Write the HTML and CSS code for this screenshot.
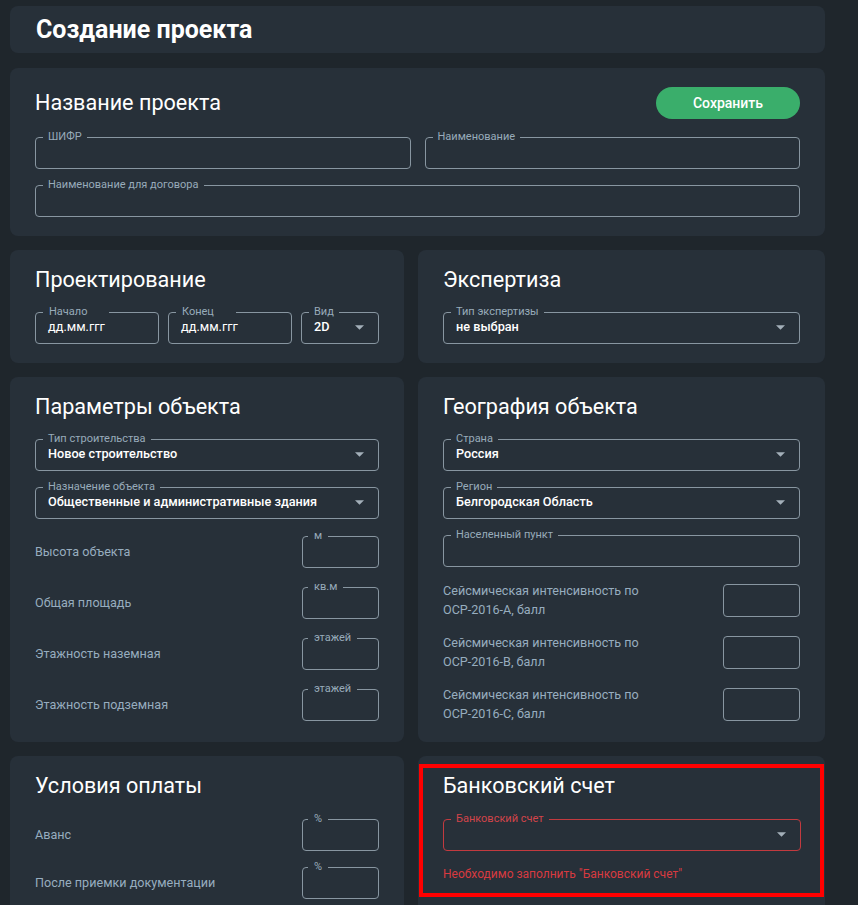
FILE: index.html
```html
<!DOCTYPE html>
<html lang="ru">
<head>
<meta charset="utf-8">
<title>Создание проекта</title>
<link rel="stylesheet" href="styles.css">
</head>
<body>
<main class="page">
  <header class="card card--title">
    <h1 class="page-title">Создание проекта</h1>
  </header>

  <section class="card card--name">
    <div class="card-head">
      <h2 class="card-title">Название проекта</h2>
      <button class="btn-save" type="button">Сохранить</button>
    </div>
    <div class="name-grid">
      <fieldset class="field"><legend>ШИФР</legend><div class="field-value"></div></fieldset>
      <fieldset class="field"><legend>Наименование</legend><div class="field-value"></div></fieldset>
      <fieldset class="field field--full"><legend>Наименование для договора</legend><div class="field-value"></div></fieldset>
    </div>
  </section>

  <div class="cards-grid">
    <section class="card">
      <h2 class="card-title">Проектирование</h2>
      <div class="dates">
        <fieldset class="field"><legend class="legend--wide">Начало</legend><div class="field-value field-value--normal">дд.мм.ггг</div></fieldset>
        <fieldset class="field"><legend class="legend--wide">Конец</legend><div class="field-value field-value--normal">дд.мм.ггг</div></fieldset>
        <fieldset class="field"><legend>Вид</legend><div class="field-value"><span>2D</span><svg class="caret" viewBox="0 0 10 5" width="9" height="5"><path d="M0 0h10L5 5z"/></svg></div></fieldset>
      </div>
    </section>

    <section class="card">
      <h2 class="card-title">Экспертиза</h2>
      <fieldset class="field"><legend>Тип экспертизы</legend><div class="field-value"><span>не выбран</span><svg class="caret" viewBox="0 0 10 5" width="9" height="5"><path d="M0 0h10L5 5z"/></svg></div></fieldset>
    </section>

    <section class="card">
      <h2 class="card-title">Параметры объекта</h2>
      <div class="stack">
        <fieldset class="field"><legend>Тип строительства</legend><div class="field-value"><span>Новое строительство</span><svg class="caret" viewBox="0 0 10 5" width="9" height="5"><path d="M0 0h10L5 5z"/></svg></div></fieldset>
        <fieldset class="field"><legend>Назначение объекта</legend><div class="field-value"><span>Общественные и административные здания</span><svg class="caret" viewBox="0 0 10 5" width="9" height="5"><path d="M0 0h10L5 5z"/></svg></div></fieldset>
        <div class="rows">
          <div class="row"><span class="row-label">Высота объекта</span><fieldset class="field field--small"><legend>м</legend><div class="field-value"></div></fieldset></div>
          <div class="row"><span class="row-label">Общая площадь</span><fieldset class="field field--small"><legend>кв.м</legend><div class="field-value"></div></fieldset></div>
          <div class="row"><span class="row-label">Этажность наземная</span><fieldset class="field field--small"><legend>этажей</legend><div class="field-value"></div></fieldset></div>
          <div class="row"><span class="row-label">Этажность подземная</span><fieldset class="field field--small"><legend>этажей</legend><div class="field-value"></div></fieldset></div>
        </div>
      </div>
    </section>

    <section class="card">
      <h2 class="card-title">География объекта</h2>
      <div class="stack">
        <fieldset class="field"><legend>Страна</legend><div class="field-value"><span>Россия</span><svg class="caret" viewBox="0 0 10 5" width="9" height="5"><path d="M0 0h10L5 5z"/></svg></div></fieldset>
        <fieldset class="field"><legend>Регион</legend><div class="field-value"><span>Белгородская Область</span><svg class="caret" viewBox="0 0 10 5" width="9" height="5"><path d="M0 0h10L5 5z"/></svg></div></fieldset>
        <fieldset class="field"><legend>Населенный пункт</legend><div class="field-value"></div></fieldset>
        <div class="rows rows--seismic">
          <div class="row row--seismic"><span class="row-label row-label--wrap">Сейсмическая интенсивность по ОСР-2016-А, балл</span><div class="box"></div></div>
          <div class="row row--seismic"><span class="row-label row-label--wrap">Сейсмическая интенсивность по ОСР-2016-B, балл</span><div class="box"></div></div>
          <div class="row row--seismic"><span class="row-label row-label--wrap">Сейсмическая интенсивность по ОСР-2016-C, балл</span><div class="box"></div></div>
        </div>
      </div>
    </section>

    <section class="card card--bottom">
      <h2 class="card-title">Условия оплаты</h2>
      <div class="rows rows--pay">
        <div class="row"><span class="row-label">Аванс</span><fieldset class="field field--small"><legend>%</legend><div class="field-value"></div></fieldset></div>
        <div class="row"><span class="row-label">После приемки документации</span><fieldset class="field field--small"><legend>%</legend><div class="field-value"></div></fieldset></div>
      </div>
    </section>

    <section class="card card--bank">
      <div class="highlight">
        <h2 class="card-title">Банковский счет</h2>
        <fieldset class="field field--error"><legend>Банковский счет</legend><div class="field-value"><span></span><svg class="caret" viewBox="0 0 10 5" width="9" height="5"><path d="M0 0h10L5 5z"/></svg></div></fieldset>
        <p class="error-text">Необходимо заполнить "Банковский счет"</p>
      </div>
    </section>
  </div>
</main>
</body>
</html>
```

FILE: styles.css
```css
* {
  box-sizing: border-box;
}

html,
body {
  margin: 0;
  height: 100%;
  overflow: hidden;
}

body {
  background: #1f262c;
  font-family: Roboto, "Noto Sans", "Liberation Sans", sans-serif;
  color: #ffffff;
}

.page {
  width: 815px;
  margin-left: 10px;
  padding-top: 6px;
  display: flex;
  flex-direction: column;
  gap: 14px;
}

.card {
  background: #273039;
  border-radius: 8px;
  padding: 17px 25px 19px;
}

.card--title {
  padding: 10px 26px 9px;
  margin-bottom: 1px;
}

.page-title {
  margin: 0;
  font-size: 25px;
  line-height: 28px;
  font-weight: 700;
}

.card--name {
  padding-top: 19px;
}

.card-head {
  display: flex;
  align-items: center;
  justify-content: space-between;
}

.card-title {
  margin: 0 0 13px;
  font-size: 21.6px;
  line-height: 26px;
  font-weight: 400;
  color: #ffffff;
}

.card-head .card-title {
  margin: 0;
}

.btn-save {
  width: 144px;
  height: 32px;
  border: 0;
  border-radius: 16px;
  background: #3aae6b;
  color: #ffffff;
  font-family: Roboto, "Noto Sans", sans-serif;
  font-size: 14px;
  font-weight: 500;
  line-height: 32px;
  padding: 0;
  cursor: pointer;
}

.name-grid {
  display: grid;
  grid-template-columns: 1fr 1fr;
  gap: 10px 14px;
  margin-top: 12px;
}

.field--full {
  grid-column: 1 / -1;
}

.cards-grid {
  display: grid;
  grid-template-columns: 394px 1fr;
  gap: 14px;
}

/* outlined field */
.field {
  margin: 0;
  min-width: 0;
  border: 1px solid #8896a1;
  border-radius: 4px;
  padding: 0 12px 0 7px;
}

.field legend {
  padding: 0 5px;
  font-size: 11px;
  line-height: 12px;
  color: #98abba;
}

.field legend.legend--wide {
  padding: 0 22px 0 6px;
}

.field-value {
  display: flex;
  align-items: center;
  justify-content: space-between;
  height: 25px;
  padding: 0 2px 7px 5px;
  font-size: 12.7px;
  line-height: 18px;
  font-weight: 500;
  color: #ffffff;
  white-space: nowrap;
}

.field-value--normal {
  font-weight: 400;
}

.caret {
  flex: none;
  fill: #a3afb9;
}

.dates {
  display: grid;
  grid-template-columns: 124px 124px 1fr;
  gap: 9px;
}

.stack {
  display: flex;
  flex-direction: column;
  gap: 10px;
}

.rows {
  display: flex;
  flex-direction: column;
  gap: 13px;
  margin-top: 1px;
}

.rows--seismic {
  gap: 14px;
  margin-top: 4px;
}

.rows--pay {
  gap: 10px;
  margin-top: 0;
}

.row {
  display: flex;
  align-items: center;
  justify-content: space-between;
}

.row-label {
  padding-top: 6px;
  font-size: 12.6px;
  line-height: 16px;
  color: #97adbf;
}

.row--seismic .row-label {
  padding-top: 0;
}

.row-label--wrap {
  max-width: 220px;
  line-height: 19px;
}

.field--small {
  flex: none;
  width: 77px;
  padding: 0 4px 0 5px;
}

.field--small legend {
  padding: 0 6px;
}

.box {
  flex: none;
  width: 77px;
  height: 33px;
  border: 1px solid #8896a1;
  border-radius: 4px;
}

.card--bottom {
  padding-top: 17px;
}

.card--bottom .card-title {
  margin-bottom: 14px;
}

.card--bank {
  padding: 8px 1px 0;
}

.highlight {
  border: 4px solid #ff0000;
  padding: 5px 19px 11px 20px;
}

.highlight .card-title {
  margin-bottom: 14px;
}

.field--error {
  border-color: #c23a3f;
}

.field--error legend {
  color: #d2444a;
}

.error-text {
  margin: 15px 0 0;
  font-size: 12px;
  line-height: 16px;
  color: #d83a40;
}
```
